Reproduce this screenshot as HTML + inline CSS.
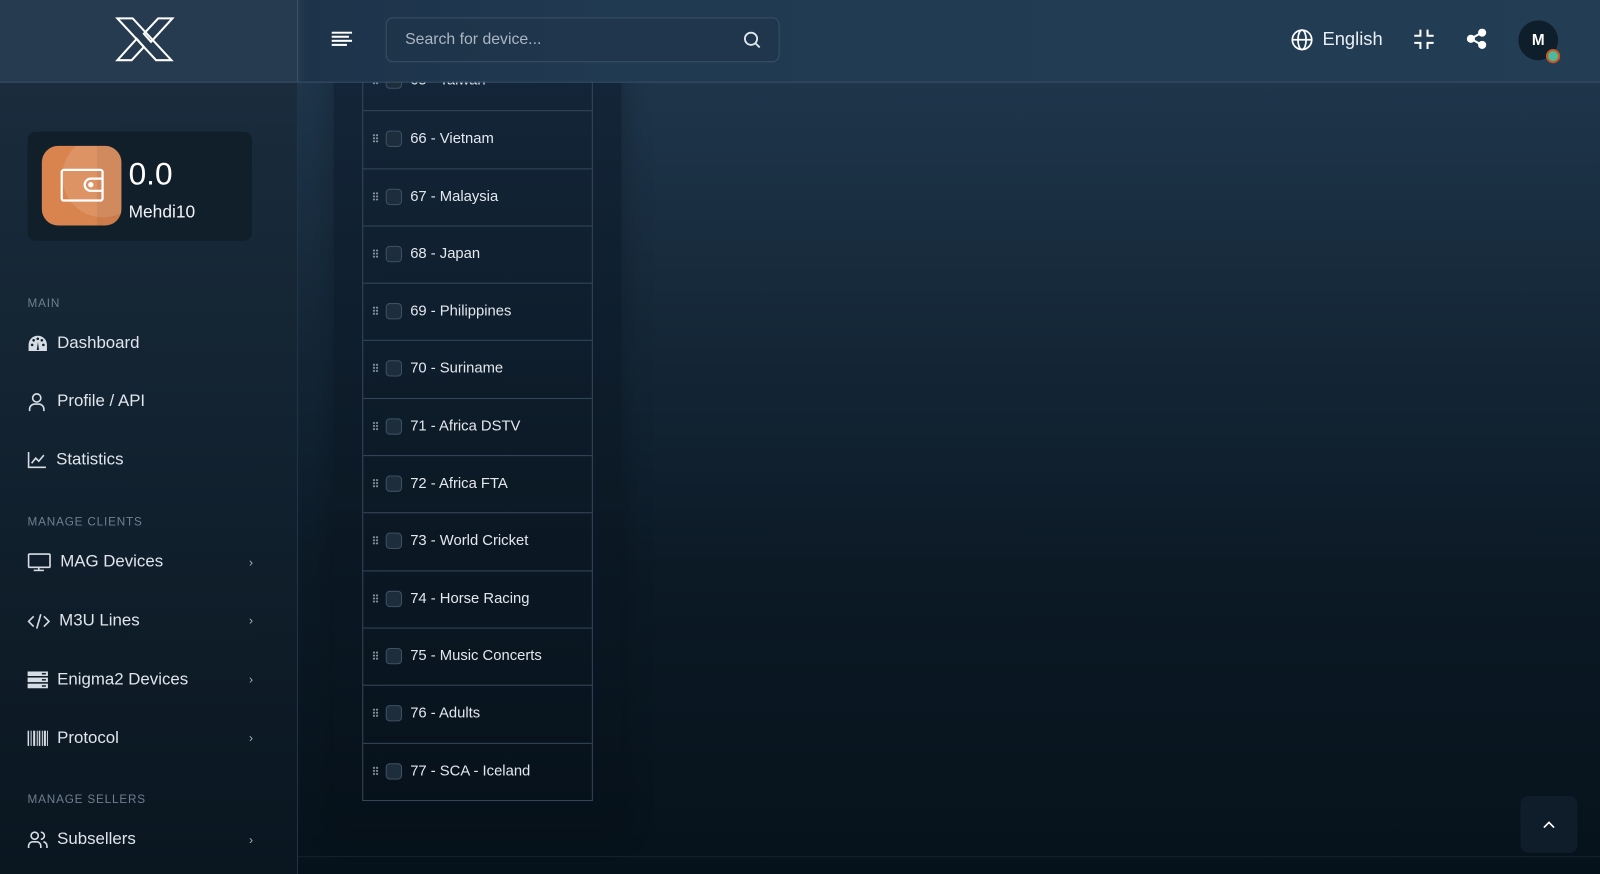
<!DOCTYPE html>
<html style="background:#06121b"><head><meta charset="utf-8"><style>
*{box-sizing:border-box;margin:0;padding:0}
html,body{width:1600px;height:874px;overflow:hidden}
body{font-family:"Liberation Sans",sans-serif;color:#e6ebf0;background:#06121b;position:relative}
#w{position:absolute;left:0;top:0;width:1568px;height:857px;transform:scale(1.0204);transform-origin:0 0;background:linear-gradient(180deg,#223a51 0%,#172b3d 30%,#0c1a26 65%,#06121b 100%)}
.hdr{position:absolute;left:0;top:0;width:1568px;height:81px;border-bottom:1px solid #3a5066;background:linear-gradient(90deg,#263b50 0,#263b50 291px,#1d334a 300px,#203a52 600px,#233d55 1568px);z-index:5}
.top{z-index:6}
.side{position:absolute;left:0;top:81px;width:292px;height:776px;border-right:1px solid #233445;background:linear-gradient(180deg,#1a2c3d 0%,#132331 40%,#0a1620 100%)}
.logoSep{position:absolute;left:291px;top:0;width:1px;height:80px;background:#3a5066}
.wallet{position:absolute;left:27px;top:129px;width:220px;height:107px;border-radius:8px;background:#111f2b}
.wicon{position:absolute;left:14px;top:14px;width:78px;height:78px;border-radius:16px;background:#d9844f;overflow:hidden}
.sec{position:absolute;left:27px;font-size:11.5px;letter-spacing:.8px;color:#6f7f8e}
.item{position:absolute;left:27px;font-size:16.5px;color:#dfe5eb;display:flex;align-items:center}
.item svg{margin-right:9px}
.chev{position:absolute;left:244px;font-size:12px;color:#aab4be}
.panel{position:absolute;left:327px;top:40px;width:282px;height:773px;border-radius:8px;background:linear-gradient(180deg,#14263a 0%,#0d1b28 50%,#06111a 100%);box-shadow:0 0 30px rgba(0,0,0,.25)}
.tbl{position:absolute;left:355px;top:52px;width:226px;border:1px solid #34475a;border-top:none}
.row{height:56.3px;border-top:1px solid #34475a;position:relative;font-size:14.5px;color:#e3e8ed}
.row .g{position:absolute;left:9px;top:22px;width:6px;height:9px;background-image:radial-gradient(circle,#8a96a2 0.9px,transparent 1.1px);background-size:3px 3px}
.row .c{position:absolute;left:22px;top:19px;width:16px;height:16px;border-radius:4px;border:1px solid #3e5062;background:#1e2d3b}
.row span{position:absolute;left:46px;top:19px}
.abs{position:absolute}
</style></head><body><div id="w">
<div class="side"></div>
<div class="wallet"><div class="wicon"><div style="position:absolute;left:20px;top:-10px;width:80px;height:80px;border-radius:50%;background:rgba(255,255,255,.12)"></div><div style="position:absolute;left:54px;top:0;width:24px;height:78px;background:rgba(0,0,0,.06)"></div>
<svg style="position:absolute;left:18px;top:22px" width="44" height="34" fill="none" stroke="#fff" stroke-width="2.2"><rect x="1.5" y="1.5" width="40" height="30" rx="2"/><path d="M41.5 10H30a6 6 0 000 12h11.5"/><circle cx="30" cy="16" r="1.5" fill="#fff"/></svg></div>
<div style="position:absolute;left:99px;top:24px;font-size:31px;color:#fff">0.0</div>
<div style="position:absolute;left:99px;top:69px;font-size:17px;color:#f0f3f6">Mehdi10</div></div>

<div class="sec" style="top:292px">MAIN</div>
<div class="item" style="top:327px"><svg width="20" height="18" viewBox="0 0 20 18"><path d="M10 1a9 9 0 00-9 9v6h18v-6a9 9 0 00-9-9z" fill="#d6dde4"/><g fill="#132331"><circle cx="4.5" cy="10" r="1.3"/><circle cx="6" cy="5.5" r="1.3"/><circle cx="10" cy="4" r="1.3"/><circle cx="14" cy="5.5" r="1.3"/><circle cx="15.5" cy="10" r="1.3"/><path d="M9 15l1.2-8 1 8z"/></g></svg>Dashboard</div>
<div class="item" style="top:384px"><svg width="20" height="18" fill="none" stroke="#d6dde4" stroke-width="1.6"><circle cx="9" cy="5" r="4"/><path d="M2 18v-2a5 5 0 015-5h4a5 5 0 015 5v2"/></svg>Profile / API</div>
<div class="item" style="top:441px"><svg width="19" height="18" fill="none" stroke="#d6dde4" stroke-width="1.6"><path d="M1 1v15h17M4 12l4-5 3 3 5-6"/></svg>Statistics</div>
<div class="sec" style="top:506px">MANAGE CLIENTS</div>
<div class="item" style="top:541px"><svg width="23" height="18" fill="none" stroke="#d6dde4" stroke-width="1.6"><rect x="1" y="1" width="21" height="13" rx="1"/><path d="M11 14v3M6 17h10"/></svg>MAG Devices</div><div class="chev" style="top:544px">›</div>
<div class="item" style="top:599px"><svg width="22" height="16" fill="none" stroke="#d6dde4" stroke-width="1.6"><path d="M6 3L1 8l5 5M16 3l5 5-5 5M13 1L9 15"/></svg>M3U Lines</div><div class="chev" style="top:601px">›</div>
<div class="item" style="top:657px"><svg width="20" height="17"><g fill="#d6dde4"><rect y="0" width="20" height="4.5"/><rect y="6" width="20" height="4.5"/><rect y="12" width="20" height="4.5"/></g><g fill="#132331"><rect x="14" y="1.5" width="4" height="1.5"/><rect x="14" y="7.5" width="4" height="1.5"/><rect x="14" y="13.5" width="4" height="1.5"/></g></svg>Enigma2 Devices</div><div class="chev" style="top:659px">›</div>
<div class="item" style="top:714px"><svg width="20" height="16"><g fill="#d6dde4"><rect x="0" width="1.5" height="15"/><rect x="3" width="1" height="15"/><rect x="5.5" width="2" height="15"/><rect x="9" width="1" height="15"/><rect x="11" width="1.5" height="15"/><rect x="14" width="1" height="15"/><rect x="16" width="2" height="15"/><rect x="19" width="1" height="15"/></g></svg>Protocol</div><div class="chev" style="top:716px">›</div>
<div class="sec" style="top:778px">MANAGE SELLERS</div>
<div class="item" style="top:813px"><svg width="20" height="18" fill="none" stroke="#d6dde4" stroke-width="1.6"><circle cx="7" cy="5" r="3.5"/><path d="M1 17v-2a4 4 0 014-4h4a4 4 0 014 4v2M13 1.5a3.5 3.5 0 010 7M15.5 11a4 4 0 013.5 4v2"/></svg>Subsellers</div><div class="chev" style="top:816px">›</div>

<div class="panel"></div>
<div class="tbl">
<div class="row" style="border-top:none"><i class="g"></i><i class="c"></i><span>65 - Taiwan</span></div>
<div class="row"><i class="g"></i><i class="c"></i><span>66 - Vietnam</span></div>
<div class="row"><i class="g"></i><i class="c"></i><span>67 - Malaysia</span></div>
<div class="row"><i class="g"></i><i class="c"></i><span>68 - Japan</span></div>
<div class="row"><i class="g"></i><i class="c"></i><span>69 - Philippines</span></div>
<div class="row"><i class="g"></i><i class="c"></i><span>70 - Suriname</span></div>
<div class="row"><i class="g"></i><i class="c"></i><span>71 - Africa DSTV</span></div>
<div class="row"><i class="g"></i><i class="c"></i><span>72 - Africa FTA</span></div>
<div class="row"><i class="g"></i><i class="c"></i><span>73 - World Cricket</span></div>
<div class="row"><i class="g"></i><i class="c"></i><span>74 - Horse Racing</span></div>
<div class="row"><i class="g"></i><i class="c"></i><span>75 - Music Concerts</span></div>
<div class="row"><i class="g"></i><i class="c"></i><span>76 - Adults</span></div>
<div class="row"><i class="g"></i><i class="c"></i><span>77 - SCA - Iceland</span></div>
</div>
<div style="position:absolute;left:292px;top:839px;width:1276px;height:1px;background:#14222e"></div>
<div style="position:absolute;left:1490px;top:780px;width:56px;height:56px;border-radius:8px;background:#0e1d29"></div>
<svg style="position:absolute;left:1512px;top:803px" width="12" height="10" fill="none" stroke="#fff" stroke-width="1.6"><path d="M1 8l5-5 5 5"/></svg>

<div class="hdr"></div>
<div class="logoSep top"></div>
<svg class="abs top" style="left:113px;top:16px" width="58" height="45" viewBox="0 0 58 45" fill="none" stroke="#fff" stroke-width="2"><path d="M2 2h15l38 41H40z"/><path d="M56 2H42L28 17l7 8z"/><path d="M2 43h14l12-13-7-8z"/></svg>
<svg class="abs top" style="left:325px;top:31px" width="21" height="15"><g fill="#fff"><rect y="0" width="20" height="2"/><rect y="4" width="17" height="2"/><rect y="8" width="20" height="2"/><rect y="12" width="15" height="2"/></g></svg>
<div class="abs top" style="left:378px;top:17px;width:386px;height:44px;border:1px solid #3a5064;border-radius:7px;background:rgba(30,50,70,.45)"></div>
<div class="abs top" style="left:397px;top:30px;font-size:15.5px;color:#aab6c2">Search for device...</div>
<svg class="abs top" style="left:728px;top:30px" width="18" height="18" fill="none" stroke="#dfe6ec" stroke-width="1.8"><circle cx="8" cy="8" r="6"/><path d="M12.5 12.5l4 4"/></svg>
<svg class="abs top" style="left:1265px;top:28px" width="22" height="22" fill="none" stroke="#fff" stroke-width="1.7"><circle cx="11" cy="11" r="9.5"/><ellipse cx="11" cy="11" rx="4" ry="9.5"/><path d="M1.5 11h19"/></svg>
<div class="abs top" style="left:1296px;top:28px;font-size:18px;color:#e9eef2">English</div>
<svg class="abs top" style="left:1385px;top:28px" width="21" height="21" fill="none" stroke="#fff" stroke-width="2"><path d="M7 1v6H1M14 1v6h6M7 20v-6H1M14 20v-6h6"/></svg>
<svg class="abs top" style="left:1437px;top:28px" width="20" height="20" fill="#fff" stroke="#fff" stroke-width="2"><circle cx="15.5" cy="4" r="3"/><circle cx="4.5" cy="10" r="3"/><circle cx="15.5" cy="16" r="3"/><path d="M15 4L4.5 10 15 16" fill="none"/></svg>
<div class="abs top" style="left:1488px;top:20px;width:39px;height:39px;border-radius:50%;background:#0f1e2b;color:#fff;font-size:15px;font-weight:bold;text-align:center;line-height:39px">M</div>
<div class="abs top" style="left:1515px;top:48px;width:14px;height:14px;border-radius:50%;background:#4fb89a;border:2.5px solid #c9551f"></div>
</div></body></html>
